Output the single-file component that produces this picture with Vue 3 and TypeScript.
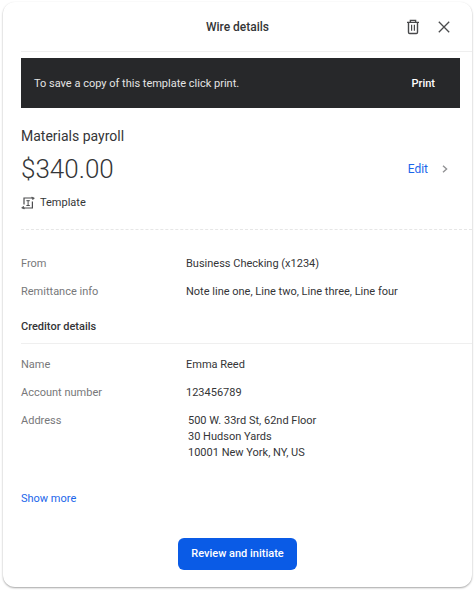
<script setup lang="ts">
interface Detail {
  label: string
  lines: string[]
}

const payment: Detail[] = [
  { label: 'From', lines: ['Business Checking (x1234)'] },
  { label: 'Remittance info', lines: ['Note line one, Line two, Line three, Line four'] },
]

const creditor: Detail[] = [
  { label: 'Name', lines: ['Emma Reed'] },
  { label: 'Account number', lines: ['123456789'] },
  { label: 'Address', lines: ['500 W. 33rd St, 62nd Floor', '30 Hudson Yards', '10001 New York, NY, US'] },
]
</script>

<template>
  <main class="card">
    <header class="header">
      <h1 class="title">Wire details</h1>
      <div class="actions">
        <button type="button" class="icon-button" aria-label="Delete">
          <svg width="14" height="16" viewBox="0 0 14 16" fill="none" stroke="#48494b" stroke-width="1.4">
            <path d="M1 3.4h12M4.4 3.2V1.4h5.2v1.8M2.5 3.6v9.7q0 1.2 1.2 1.2h6.6q1.2 0 1.2-1.2V3.6" />
            <path d="M5.6 5.8v6M8.4 5.8v6" stroke-width="1.2" />
          </svg>
        </button>
        <button type="button" class="icon-button" aria-label="Close">
          <svg width="12" height="12" viewBox="0 0 12 12" fill="none" stroke="#4a4b4d" stroke-width="1.3">
            <path d="M.8.8l10.4 10.4M11.2.8L.8 11.2" />
          </svg>
        </button>
      </div>
    </header>

    <div class="banner">
      <span>To save a copy of this template click print.</span>
      <button type="button" class="print">Print</button>
    </div>

    <section class="summary">
      <div>
        <h2 class="name">Materials payroll</h2>
        <p class="amount">$340.00</p>
        <p class="tag">
          <svg width="14" height="14" viewBox="0 0 14 14" fill="none" stroke="#4c4d4f" stroke-width="1.2">
            <path d="M3 8.6V2h8.4M11.4 5.6V12H2.6" />
            <path d="M10.6 1.1l1.2 2.6L13.4 2zM3.4 12.9L2.4 10.2.6 12z" fill="#4c4d4f" stroke-width=".6" />
            <path d="M5.4 4.7h3.4M7.1 4.7v4.8M5.4 9.5h3.4" stroke-width="1" />
          </svg>
          Template
        </p>
      </div>
      <a href="#edit" class="edit">
        Edit
        <svg width="6" height="8" viewBox="0 0 6 8" fill="none" stroke="#929395" stroke-width="1.4">
          <path d="M1 .7L4.6 4 1 7.3" />
        </svg>
      </a>
    </section>

    <dl class="details payment">
      <div v-for="item in payment" :key="item.label" class="row">
        <dt>{{ item.label }}</dt>
        <dd><span v-for="line in item.lines" :key="line">{{ line }}</span></dd>
      </div>
    </dl>

    <h3 class="subhead">Creditor details</h3>

    <dl class="details creditor">
      <div v-for="item in creditor" :key="item.label" class="row">
        <dt>{{ item.label }}</dt>
        <dd :class="{ multiline: item.lines.length > 1 }">
          <span v-for="line in item.lines" :key="line">{{ line }}</span>
        </dd>
      </div>
    </dl>

    <a href="#more" class="more">Show more</a>

    <footer class="footer">
      <button type="button" class="primary">Review and initiate</button>
    </footer>
  </main>
</template>

<style>
body {
  background: #fff;
}
</style>

<style scoped>
* {
  box-sizing: border-box;
  margin: 0;
}

.card {
  margin: 2px 3px 4px;
  padding: 0 0 17px 18px;
  border-radius: 12px;
  background: #fff;
  box-shadow: 0 1px 2px rgba(0, 0, 0, 0.36);
  color: #343537;
  font: 400 11px/16px Roboto, sans-serif;
}

button {
  padding: 0;
  border: 0;
  background: none;
  color: inherit;
  font: inherit;
  cursor: pointer;
}

a {
  color: #1b66ea;
  text-decoration: none;
}

.header {
  display: grid;
  grid-template-columns: 1fr auto 1fr;
  align-items: center;
  height: 50px;
  margin-bottom: 6px;
  padding-right: 18px;
  border-bottom: 1px solid #efefef;
}

.title {
  grid-column: 2;
  font-size: 12px;
  font-weight: 500;
}

.actions {
  display: flex;
  justify-content: flex-end;
  align-items: center;
  gap: 15px;
  padding-right: 2px;
}

.icon-button {
  display: grid;
  place-items: center;
  width: 16px;
  height: 16px;
}

.banner {
  display: flex;
  justify-content: space-between;
  align-items: center;
  height: 50px;
  margin-right: 12px;
  padding: 2px 25px 0 13px;
  background: #27282a;
  color: #e4e4e4;
}

.print {
  color: #fff;
  font-weight: 500;
}

.summary {
  display: flex;
  justify-content: space-between;
  align-items: center;
  margin-bottom: 20px;
  padding: 18px 24px 18px 0;
  border-bottom: 1px dashed #e6e6e6;
}

.name {
  font-size: 14px;
  font-weight: 400;
  line-height: 20px;
}

.amount {
  padding: 8px 0 11px;
  font-size: 26px;
  font-weight: 300;
  line-height: 30px;
}

.tag {
  display: flex;
  align-items: center;
  gap: 5px;
}

.edit {
  display: flex;
  align-items: center;
  gap: 14px;
  font-size: 12px;
}

.row {
  display: grid;
  grid-template-columns: 165px 1fr;
  padding: 6px 0;
}

dt {
  color: #77787a;
}

dd span {
  display: block;
}

.multiline {
  padding-left: 2px;
}

.subhead {
  padding: 13px 0 8px;
  border-bottom: 1px solid #efefef;
  font-size: 11px;
  font-weight: 500;
}

.creditor {
  padding-top: 7px;
}

.more {
  display: inline-block;
  margin-top: 24px;
}

.footer {
  display: flex;
  justify-content: center;
  padding: 31px 18px 0 0;
}

.primary {
  height: 32px;
  padding: 0 13px;
  border-radius: 6px;
  background: #0a5be6;
  color: #fff;
  font-weight: 500;
}
</style>
